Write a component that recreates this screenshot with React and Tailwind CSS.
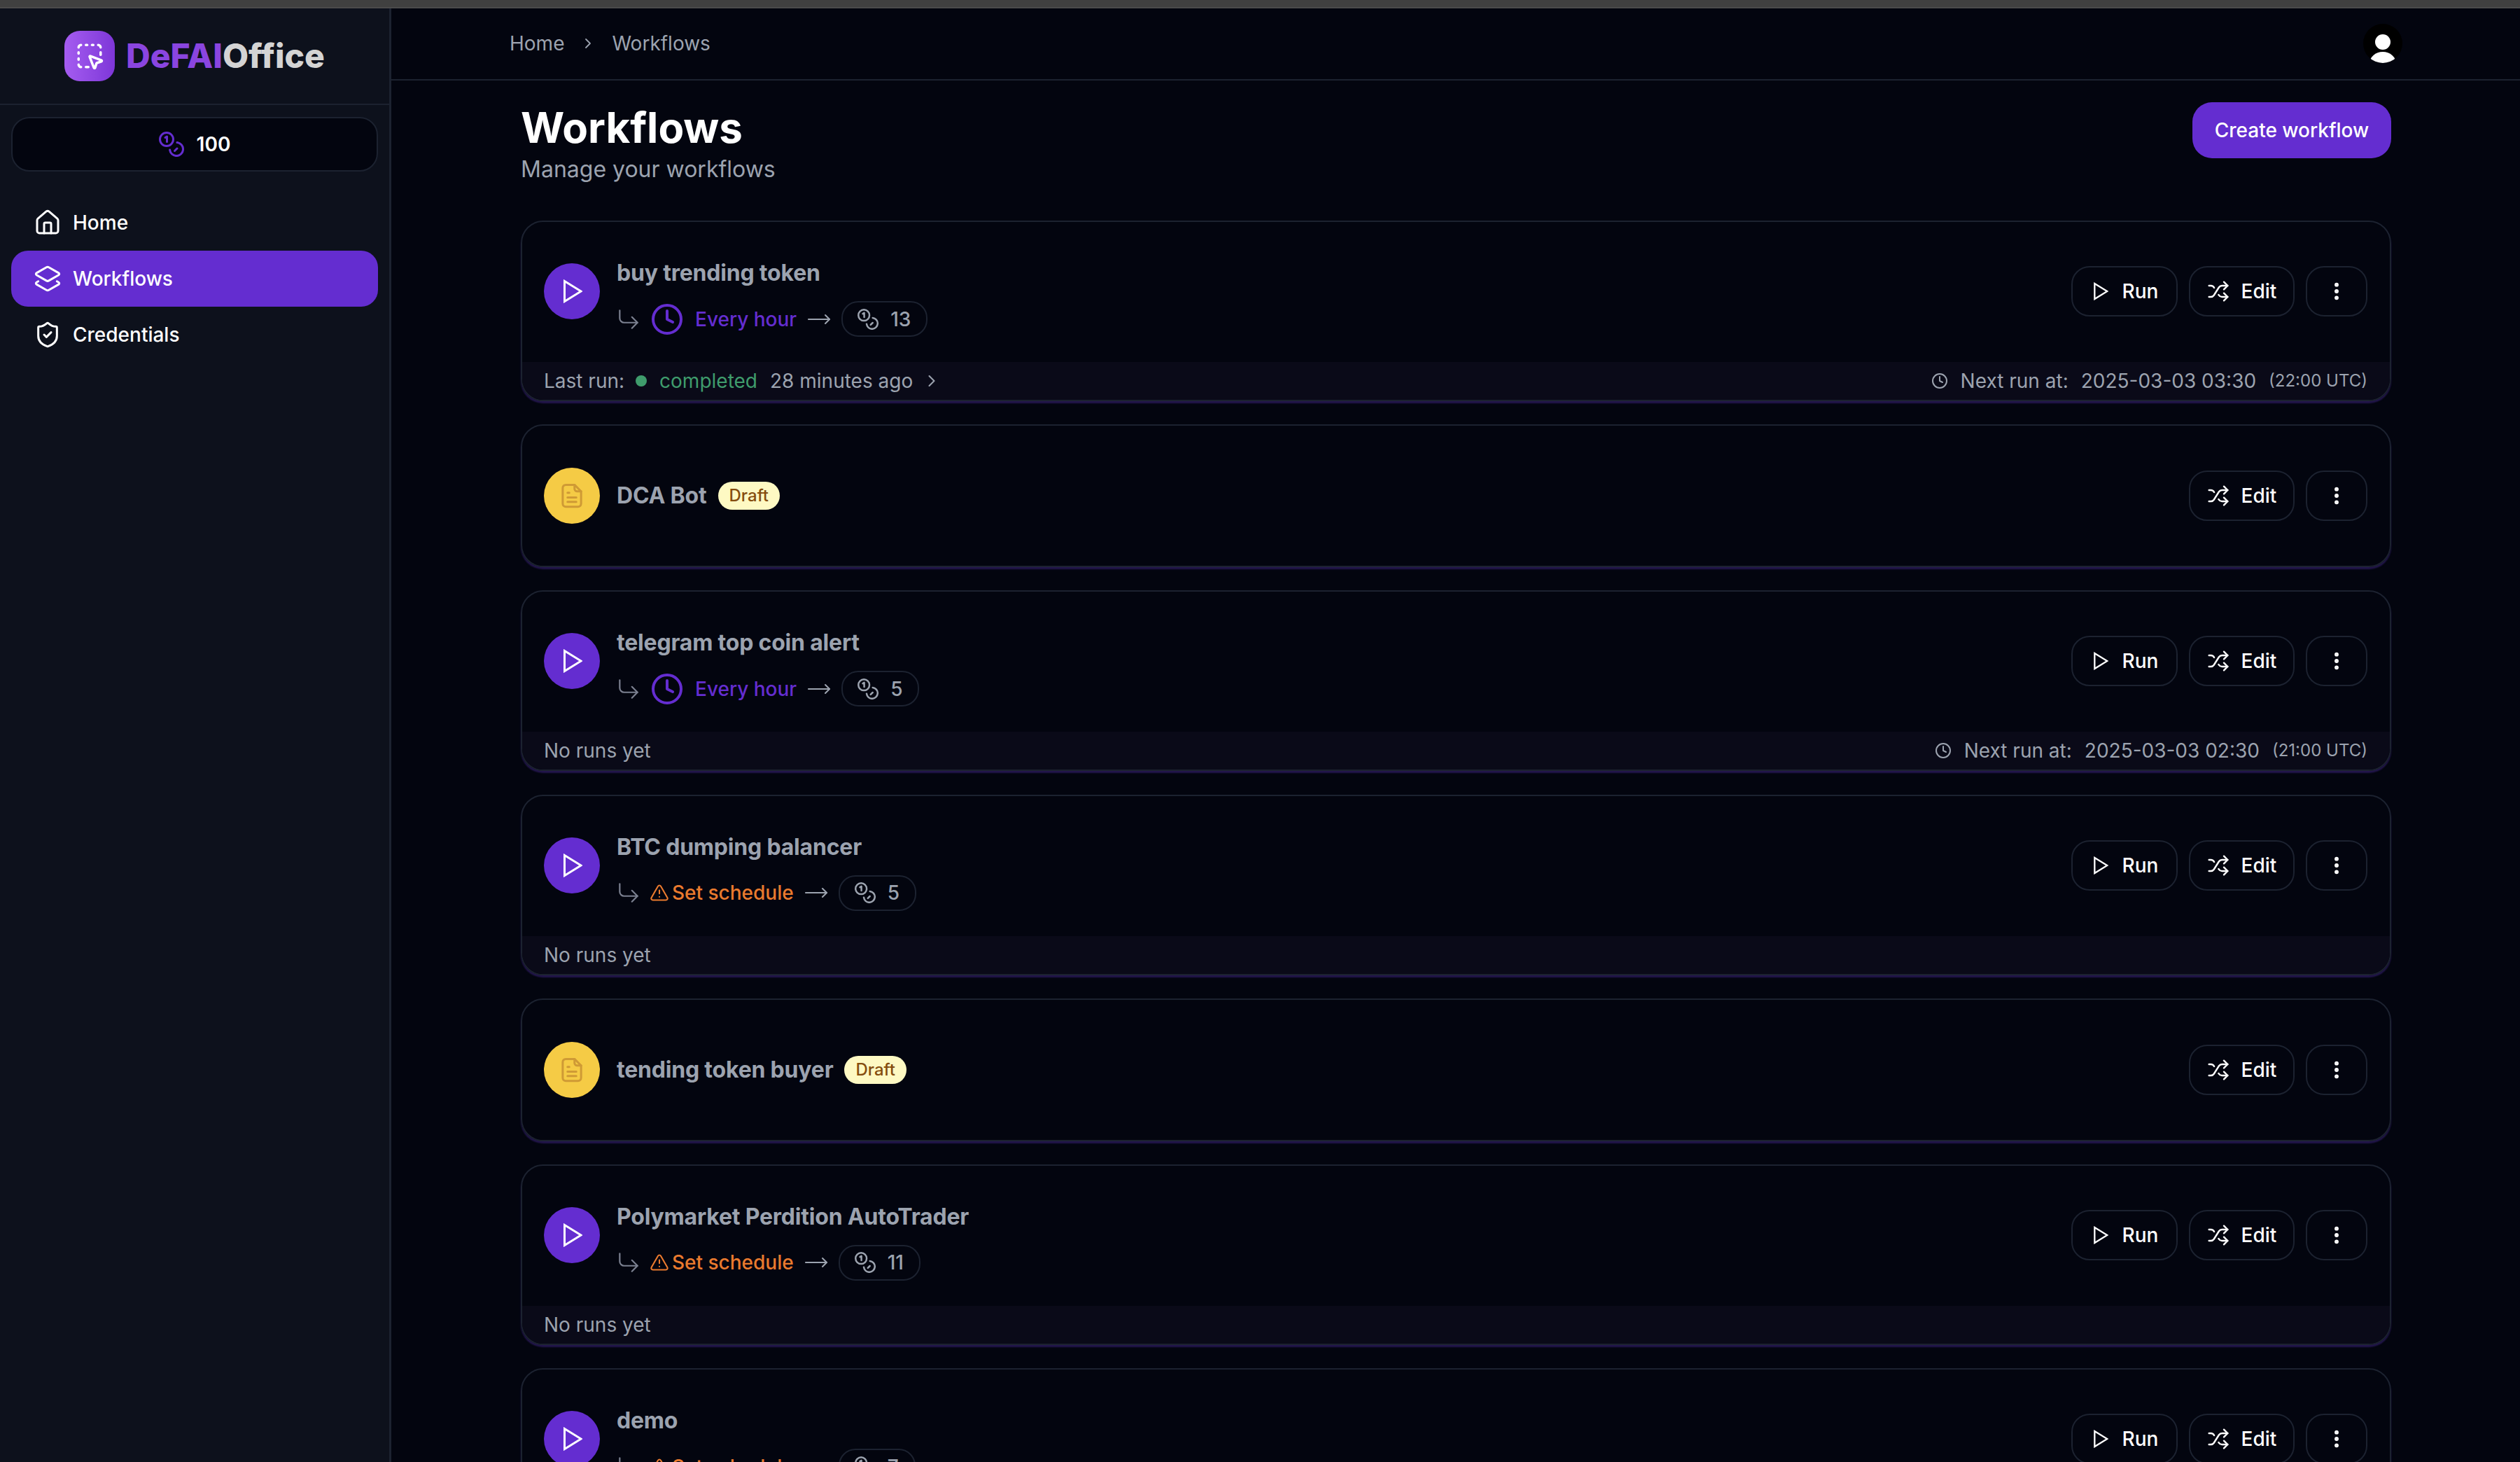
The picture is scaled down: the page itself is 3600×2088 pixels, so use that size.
import React from 'react'
import {
  House,
  Layers2,
  ShieldCheck,
  ChevronRight,
  Clock,
  CornerDownRight,
  MoveRight,
  Shuffle,
  EllipsisVertical,
  TriangleAlert,
  SquareDashedMousePointer,
} from 'lucide-react'

const workflows = [
  { name: 'buy trending token', schedule: 'Every hour', credits: 13, lastRun: true, next: '2025-03-03 03:30', utc: '(22:00 UTC)' },
  { name: 'DCA Bot', draft: true },
  { name: 'telegram top coin alert', schedule: 'Every hour', credits: 5, next: '2025-03-03 02:30', utc: '(21:00 UTC)' },
  { name: 'BTC dumping balancer', credits: 5 },
  { name: 'tending token buyer', draft: true },
  { name: 'Polymarket Perdition AutoTrader', credits: 11 },
  { name: 'demo', credits: 7 },
]

const CoinsIcon = ({ className }) => (
  <svg viewBox="0 0 36 36" fill="none" stroke="currentColor" strokeWidth="3" strokeLinecap="round" strokeLinejoin="round" className={className}>
    <circle cx="11" cy="11" r="9.5" />
    <path d="M9 8.5 11.5 7v7.5" />
    <path d="M26 15.6a9.5 9.5 0 1 1-10.4 10.4" />
    <path d="M22.5 27.5l3.5-3.5" />
  </svg>
)

const PlayIcon = ({ className }) => (
  <svg viewBox="0 0 27 34" fill="none" stroke="currentColor" strokeWidth="3" strokeLinejoin="miter" className={className}>
    <path d="M1.5 2.5 25 17 1.5 31.5z" />
  </svg>
)

const DocIcon = ({ className }) => (
  <svg viewBox="0 0 24 28" fill="none" stroke="currentColor" strokeWidth="2.4" strokeLinecap="round" strokeLinejoin="round" className={className}>
    <path d="M15 1.5H5a3.5 3.5 0 0 0-3.5 3.5v18A3.5 3.5 0 0 0 5 26.5h14a3.5 3.5 0 0 0 3.5-3.5V9z" />
    <path d="M15 1.5V6a3 3 0 0 0 3 3h4.5" />
    <path d="M7 10.5h2M7 16h10M7 21h10" />
  </svg>
)

const UserIcon = () => (
  <svg viewBox="0 0 56 56" className="w-14 h-14 -mt-[2px]">
    <clipPath id="avatarClip">
      <circle cx="28" cy="28" r="28" />
    </clipPath>
    <circle cx="28" cy="28" r="28" fill="#000" />
    <g clipPath="url(#avatarClip)" fill="#fff">
      <circle cx="28" cy="26" r="11" />
      <ellipse cx="28" cy="57" rx="19" ry="17" />
    </g>
  </svg>
)

const NavItem = ({ icon: Icon, label, active }) => (
  <div className={`flex items-center gap-4 h-20 pl-8 rounded-[24px] text-[28px] font-medium text-white ${active ? 'bg-[#642dd0]' : ''}`}>
    <Icon size={40} strokeWidth={1.8} />
    <span>{label}</span>
  </div>
)

const Sidebar = () => (
  <aside className="w-[559px] shrink-0 bg-[#0d111c] border-r-[3px] border-[#1c2230]">
    <div className="h-[138px] flex items-center justify-center gap-4 border-b-[2px] border-[#1c2230]">
      <div className="w-[72px] h-[72px] rounded-[22px] bg-gradient-to-r from-[#a55cf0] to-[#7e36d8] flex items-center justify-center text-white">
        <SquareDashedMousePointer size={42} strokeWidth={2} />
      </div>
      <div className="text-[48px] font-extrabold leading-none">
        <span className="text-[#8a45e0]">DeFAI</span>
        <span className="text-[#d4d4d4]">Office</span>
      </div>
    </div>
    <div className="px-4 pt-[17px]">
      <div className="h-[78px] rounded-[26px] border-2 border-[#1c2230] bg-[#03050f] flex items-center justify-center gap-[18px]">
        <CoinsIcon className="w-9 h-9 text-[#642dd0]" />
        <span className="text-[28px] font-semibold text-white">100</span>
      </div>
      <nav className="mt-[33px] flex flex-col">
        <NavItem icon={House} label="Home" />
        <NavItem icon={Layers2} label="Workflows" active />
        <NavItem icon={ShieldCheck} label="Credentials" />
      </nav>
    </div>
  </aside>
)

const ActionButton = ({ children, className = '' }) => (
  <button type="button" className={`h-[72px] rounded-[26px] border-2 border-[#1c2230] flex items-center justify-center text-[28px] font-medium text-white ${className}`}>
    {children}
  </button>
)

const ScheduleRow = ({ schedule, credits }) => (
  <div className="flex items-center h-[51px] mt-4 text-[28px]">
    <CornerDownRight size={38} strokeWidth={1.4} className="text-[#7b8090] -ml-0.5" />
    {schedule ? (
      <div className="flex items-center gap-4 ml-3 text-[#642dd0] font-medium">
        <Clock size={48} strokeWidth={2} />
        <span>{schedule}</span>
      </div>
    ) : (
      <div className="flex items-center gap-1 ml-[11px] text-[#ea7a2e] font-medium">
        <TriangleAlert size={28} strokeWidth={1.8} />
        <span>Set schedule</span>
      </div>
    )}
    <MoveRight size={36} strokeWidth={1.4} className="text-[#9ca3af] mx-[14px]" />
    <div className="h-[51px] rounded-[24px] border-2 border-[#1c2230] pl-[21px] pr-[22px] flex items-center gap-[17px] text-[#9ca3af] font-medium">
      <CoinsIcon className="w-[30px] h-[30px]" />
      <span>{credits}</span>
    </div>
  </div>
)

const WorkflowCard = ({ flow }) => (
  <div className="rounded-[32px] border-2 border-[#1c2230] overflow-hidden shadow-[0_3px_2px_#23164d] shrink-0">
    <div className={`h-[200px] pl-[31px] pr-[32px] flex items-center justify-between ${flow.draft ? '' : 'pb-0.5'}`}>
      <div className="flex items-center gap-6">
        {flow.draft ? (
          <div className="w-20 h-20 rounded-full bg-[#f5cb45] flex items-center justify-center text-[#cf9a35]">
            <DocIcon className="w-[30px] h-[36px]" />
          </div>
        ) : (
          <div className="w-20 h-20 rounded-full bg-[#642dd0] flex items-center justify-center text-white pl-[3px]">
            <PlayIcon className="w-[27px] h-[34px]" />
          </div>
        )}
        {flow.draft ? (
          <div className="flex items-center gap-4">
            <span className="text-[32px] leading-[48px] font-bold tracking-[-0.2px] text-[#9ca3af]">{flow.name}</span>
            <span className="h-10 px-4 rounded-full bg-[#fef9c3] text-[#854d0e] text-[24px] font-medium flex items-center">Draft</span>
          </div>
        ) : (
          <div className="pt-[15px]">
            <div className="text-[32px] leading-[48px] font-bold tracking-[-0.2px] text-[#9ca3af]">{flow.name}</div>
            <ScheduleRow schedule={flow.schedule} credits={flow.credits} />
          </div>
        )}
      </div>
      <div className="flex items-center gap-4">
        {!flow.draft && (
          <ActionButton className="w-[152px] gap-[20px] pl-[4px]">
            <PlayIcon className="w-[21px] h-[26px]" />
            Run
          </ActionButton>
        )}
        <ActionButton className="w-[151px] gap-[17px]">
          <Shuffle size={32} strokeWidth={1.8} />
          Edit
        </ActionButton>
        <ActionButton className="w-[88px]">
          <EllipsisVertical size={32} strokeWidth={2.4} />
        </ActionButton>
      </div>
    </div>
    {!flow.draft && (
      <div className="h-[54px] pl-[31px] pr-[32px] bg-[#0a0a18] flex items-center justify-between text-[28px] text-[#9ca3af]">
        {flow.lastRun ? (
          <div className="flex items-center">
            <span>Last run:</span>
            <span className="w-4 h-4 rounded-full bg-[#3f9c6c] ml-4 mr-[18px]" />
            <span className="text-[#3f9c6c]">completed</span>
            <span className="ml-[18px]">28 minutes ago</span>
            <ChevronRight size={28} strokeWidth={1.8} className="ml-[13px]" />
          </div>
        ) : (
          <span>No runs yet</span>
        )}
        {flow.next && (
          <div className="flex items-center">
            <Clock size={24} strokeWidth={2} />
            <span className="ml-[18px]">Next run at:</span>
            <span className="ml-[18px]">{flow.next}</span>
            <span className="ml-[18px] text-[24px]">{flow.utc}</span>
          </div>
        )}
      </div>
    )}
  </div>
)

export default function App() {
  return (
    <div className="h-[2088px] w-[3600px] overflow-hidden flex flex-col bg-[#03050f] [font-family:Inter,sans-serif]">
      <div className="h-3 shrink-0 bg-[#404040] border-b-[2px] border-[#4b4b4b]" />
      <div className="flex flex-1 min-h-0">
        <Sidebar />
        <main className="flex-1 min-w-0">
          <header className="h-[103px] pl-[169px] pr-[168px] flex items-center justify-between border-b-2 border-[#1c2230]">
            <div className="flex items-center text-[28px] text-[#9ca3af] -mt-[2px]">
              <span>Home</span>
              <ChevronRight size={24} strokeWidth={1.8} className="mx-[22px]" />
              <span>Workflows</span>
            </div>
            <UserIcon />
          </header>
          <div className="pl-[185px] pr-[184px]">
            <div className="pt-[31px] flex items-start justify-between">
              <div>
                <h1 className="text-[60px] leading-[72px] font-bold text-white">Workflows</h1>
                <p className="text-[32px] leading-[48px] text-[#9ca3af]">Manage your workflows</p>
              </div>
              <button type="button" className="h-20 w-[284px] rounded-[28px] bg-[#642dd0] text-white text-[28px] font-medium">
                Create workflow
              </button>
            </div>
            <div className="mt-[49px] flex flex-col gap-[33.2px]">
              {workflows.map((flow) => (
                <WorkflowCard key={flow.name} flow={flow} />
              ))}
            </div>
          </div>
        </main>
      </div>
    </div>
  )
}
